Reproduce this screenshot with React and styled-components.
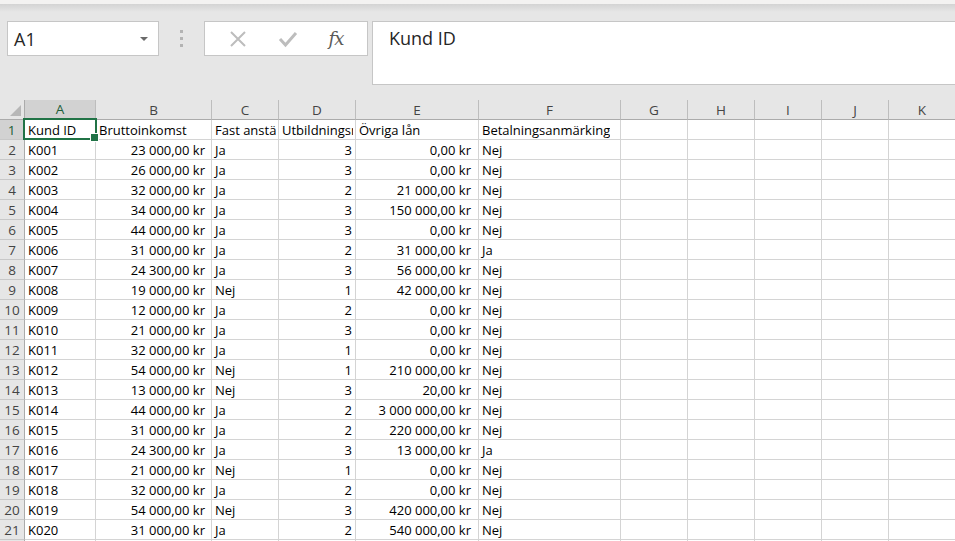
import React from "react";
import styled, { createGlobalStyle } from "styled-components";

const Global = createGlobalStyle`
  html, body { margin: 0; padding: 0; background: #ffffff; overflow: hidden; }
  * { box-sizing: border-box; }
`;

const Page = styled.div`
  width: 955px;
  height: 541px;
  display: flex;
  flex-direction: column;
  overflow: hidden;
  font-family: "Open Sans", "Noto Sans", sans-serif;
`;

const TitleStrip = styled.div`
  height: 4px;
  background: #f3f2f1;
  flex: none;
`;

const Toolbar = styled.div`
  height: 96px;
  flex: none;
  display: flex;
  align-items: flex-start;
  padding: 17px 0 0 7px;
  background: linear-gradient(#d3d3d3 0px, #e6e6e6 8px, #e6e6e6 100%);
`;

const NameBox = styled.div`
  width: 152px;
  height: 35px;
  background: #fff;
  border: 1px solid #c6c6c6;
  display: flex;
  align-items: center;
  justify-content: space-between;
  padding: 0 10px 0 6px;
  font-family: "Open Sans", sans-serif;
  font-size: 18px;
  color: #262626;
`;

const Caret = styled.span`
  width: 0;
  height: 0;
  border-left: 4px solid transparent;
  border-right: 4px solid transparent;
  border-top: 4px solid #6a6a6a;
`;

const Grip = styled.div`
  width: 45px;
  height: 35px;
  display: flex;
  flex-direction: column;
  align-items: center;
  justify-content: center;
  gap: 4px;
  & > span {
    width: 3px;
    height: 3px;
    background: #b3b3b3;
  }
`;

const FxButtons = styled.div`
  width: 164px;
  height: 35px;
  background: #fff;
  border: 1px solid #c6c6c6;
  display: flex;
  align-items: center;
  justify-content: space-around;
  padding: 0 8px;
`;

const FxLabel = styled.span`
  font-family: "DejaVu Serif", "Liberation Serif", serif;
  font-style: italic;
  font-size: 18px;
  color: #5a5a5a;
  letter-spacing: -1px;
`;

const FormulaInput = styled.div`
  margin-left: 4px;
  flex: 1;
  height: 64px;
  background: #fff;
  border: 1px solid #c6c6c6;
  border-right: none;
  padding: 4px 0 0 16px;
  font-size: 18px;
  color: #262626;
`;

const Sheet = styled.div`
  display: grid;
  grid-template-columns: 25px 71px 116px 67px 77px 123px 142px 67px 67px 67px 67px 67px;
  grid-auto-rows: 20px;
  font-size: 13px;
  color: #000;
`;

const Corner = styled.div`
  background: #e6e6e6;
  border-right: 1px solid #ababab;
  border-bottom: 1px solid #ababab;
  position: relative;
  &::after {
    content: "";
    position: absolute;
    right: 3px;
    bottom: 3px;
    width: 0;
    height: 0;
    border-left: 11px solid transparent;
    border-bottom: 11px solid #b7b7b7;
  }
`;

const ColHead = styled.div`
  background: ${(p) => (p.$active ? "#d2d2d2" : "#e6e6e6")};
  color: ${(p) => (p.$active ? "#1d5e38" : "#444")};
  border-right: 1px solid #bdbdbd;
  border-bottom: ${(p) => (p.$active ? "2px solid #217346" : "1px solid #ababab")};
  display: flex;
  align-items: center;
  justify-content: center;
  font-size: 13.5px;
`;

const RowHead = styled.div`
  background: ${(p) => (p.$active ? "#d2d2d2" : "#e6e6e6")};
  color: ${(p) => (p.$active ? "#1d5e38" : "#444")};
  border-right: ${(p) => (p.$active ? "2px solid #217346" : "1px solid #ababab")};
  border-bottom: 1px solid #c8c8c8;
  display: flex;
  align-items: center;
  justify-content: center;
  font-size: 13.5px;
`;

const Cell = styled.div`
  position: relative;
  border-right: 1px solid #d4d4d4;
  border-bottom: 1px solid #d4d4d4;
  display: flex;
  align-items: center;
  justify-content: ${(p) => (p.$right ? "flex-end" : "flex-start")};
  padding: 0 ${(p) => (p.$pr != null ? p.$pr : 2)}px 0 3px;
  white-space: nowrap;
  overflow: ${(p) => (p.$selected ? "visible" : "hidden")};
  z-index: ${(p) => (p.$selected ? 2 : "auto")};
`;

const CellText = styled.span`
  overflow: hidden;
  display: block;
`;

const Selection = styled.div`
  position: absolute;
  left: -2px;
  top: -2px;
  right: -2px;
  bottom: -1px;
  border: 2px solid #217346;
  pointer-events: none;
  &::after {
    content: "";
    position: absolute;
    right: -4px;
    bottom: -4px;
    width: 7px;
    height: 7px;
    background: #217346;
    border: 1px solid #fff;
  }
`;

const cols = ["A", "B", "C", "D", "E", "F", "G", "H", "I", "J", "K"];

const rows = [
  ["K001", "23 000,00 kr", "Ja", "3", "0,00 kr", "Nej"],
  ["K002", "26 000,00 kr", "Ja", "3", "0,00 kr", "Nej"],
  ["K003", "32 000,00 kr", "Ja", "2", "21 000,00 kr", "Nej"],
  ["K004", "34 000,00 kr", "Ja", "3", "150 000,00 kr", "Nej"],
  ["K005", "44 000,00 kr", "Ja", "3", "0,00 kr", "Nej"],
  ["K006", "31 000,00 kr", "Ja", "2", "31 000,00 kr", "Ja"],
  ["K007", "24 300,00 kr", "Ja", "3", "56 000,00 kr", "Nej"],
  ["K008", "19 000,00 kr", "Nej", "1", "42 000,00 kr", "Nej"],
  ["K009", "12 000,00 kr", "Ja", "2", "0,00 kr", "Nej"],
  ["K010", "21 000,00 kr", "Ja", "3", "0,00 kr", "Nej"],
  ["K011", "32 000,00 kr", "Ja", "1", "0,00 kr", "Nej"],
  ["K012", "54 000,00 kr", "Nej", "1", "210 000,00 kr", "Nej"],
  ["K013", "13 000,00 kr", "Nej", "3", "20,00 kr", "Nej"],
  ["K014", "44 000,00 kr", "Ja", "2", "3 000 000,00 kr", "Nej"],
  ["K015", "31 000,00 kr", "Ja", "2", "220 000,00 kr", "Nej"],
  ["K016", "24 300,00 kr", "Ja", "3", "13 000,00 kr", "Ja"],
  ["K017", "21 000,00 kr", "Nej", "1", "0,00 kr", "Nej"],
  ["K018", "32 000,00 kr", "Ja", "2", "0,00 kr", "Nej"],
  ["K019", "54 000,00 kr", "Nej", "3", "420 000,00 kr", "Nej"],
  ["K020", "31 000,00 kr", "Ja", "2", "540 000,00 kr", "Nej"],
  ["", "", "", "", "", ""],
];

const header = ["Kund ID", "Bruttoinkomst", "Fast anställning", "Utbildningsnivå", "Övriga lån", "Betalningsanmärking"];

const align = [
  { right: false },
  { right: true, pr: 6 },
  { right: false },
  { right: true, pr: 3 },
  { right: true, pr: 7 },
  { right: false },
];

function XIcon() {
  return (
    <svg width="18" height="18" viewBox="0 0 18 18">
      <path d="M2 2 L16 16 M16 2 L2 16" stroke="#bdbdbd" strokeWidth="2" fill="none" />
    </svg>
  );
}

function CheckIcon() {
  return (
    <svg width="20" height="18" viewBox="0 0 20 18">
      <path d="M2 9 L7.5 15 L18 3" stroke="#bdbdbd" strokeWidth="3" fill="none" />
    </svg>
  );
}

export default function App() {
  return (
    <Page>
      <Global />
      <TitleStrip />
      <Toolbar>
        <NameBox>
          <span>A1</span>
          <Caret />
        </NameBox>
        <Grip>
          <span />
          <span />
          <span />
        </Grip>
        <FxButtons>
          <XIcon />
          <CheckIcon />
          <FxLabel>fx</FxLabel>
        </FxButtons>
        <FormulaInput>Kund ID</FormulaInput>
      </Toolbar>
      <Sheet>
        <Corner />
        {cols.map((c) => (
          <ColHead key={c} $active={c === "A"}>{c}</ColHead>
        ))}
        <RowHead $active>1</RowHead>
        {cols.map((c, i) => (
          <Cell key={c} $selected={i === 0}>
            {i < 6 ? <CellText>{header[i]}</CellText> : null}
            {i === 0 ? <Selection /> : null}
          </Cell>
        ))}
        {rows.map((r, ri) => (
          <React.Fragment key={ri}>
            <RowHead>{ri + 2}</RowHead>
            {cols.map((c, i) => (
              <Cell key={c} $right={i < 6 && align[i].right} $pr={i < 6 ? align[i].pr : undefined}>
                {i < 6 ? r[i] : null}
              </Cell>
            ))}
          </React.Fragment>
        ))}
      </Sheet>
    </Page>
  );
}
